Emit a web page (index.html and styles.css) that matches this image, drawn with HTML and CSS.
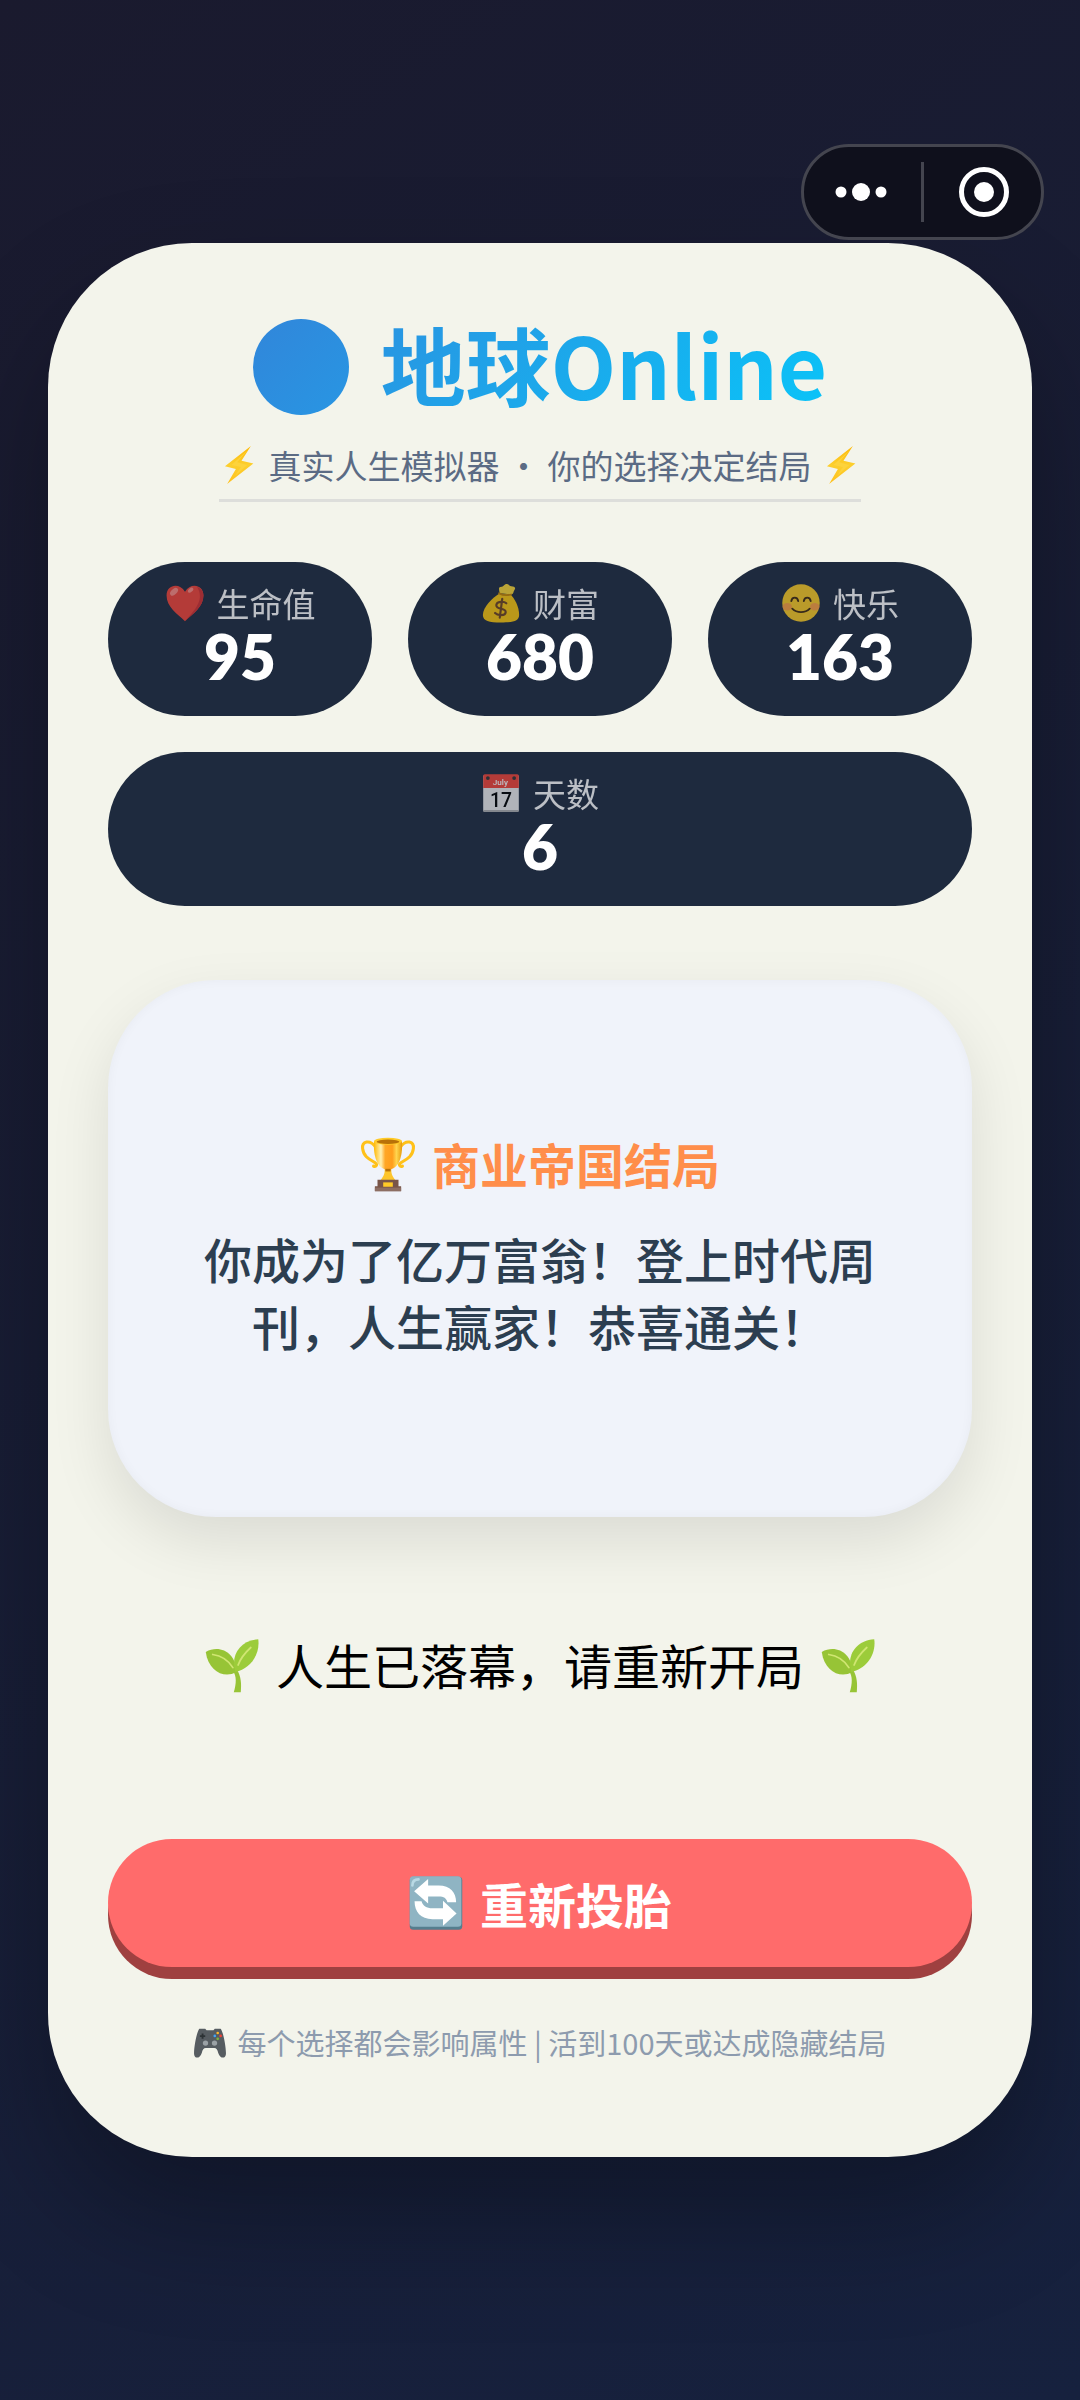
FILE: index.html
```html
<!DOCTYPE html>
<html lang="zh-CN">
<head>
<meta charset="UTF-8" />
<meta name="viewport" content="width=device-width, initial-scale=1.0" />
<title>地球Online</title>
<link rel="stylesheet" href="styles.css">
</head>
<body>
  <!-- shared icons -->
  <svg class="defs" aria-hidden="true">
    <defs>
      <linearGradient id="bolt-fill" x1="0" y1="0" x2="0" y2="1">
        <stop offset="0" stop-color="#feb804"/><stop offset=".5" stop-color="#fccf2e"/><stop offset="1" stop-color="#ffc01c"/>
      </linearGradient>
      <linearGradient id="cup-fill" x1="0" y1="0" x2="1" y2="0">
        <stop offset="0" stop-color="#ffb803"/><stop offset=".25" stop-color="#fff0b0"/><stop offset=".4" stop-color="#ffa726"/><stop offset=".65" stop-color="#ff9e1b"/><stop offset=".8" stop-color="#ffd54f"/><stop offset="1" stop-color="#e69a09"/>
      </linearGradient>
      <symbol id="bolt" viewBox="0 0 128 128">
        <path d="M102 3 19 68l35 9L26 125l84-66-38-9z" fill="url(#bolt-fill)"/>
        <path d="M92 16 40 64l30 6-18 28 38-34-32-9z" fill="#fdd33c"/>
      </symbol>
      <symbol id="sprout" viewBox="0 0 128 128">
        <path d="M66 78c9 10 8 29 2 48h16c2-18 1-37-9-52z" fill="#97c436"/>
        <path d="M74 80C46 96 10 78 4 34c34-18 70 4 70 46z" fill="#97c436"/>
        <path d="M72 80C60 44 80 8 124 5c5 37-20 68-52 75z" fill="#9ccc3a"/>
        <path d="M20 40c22 3 36 14 46 30M107 24C94 36 83 50 78 64" fill="none" stroke="#d0e672" stroke-width="4" stroke-linecap="round"/>
      </symbol>
    </defs>
  </svg>

  <div class="capsule">
    <button type="button" aria-label="更多">
      <svg viewBox="0 0 60 60"><g fill="#fff"><circle cx="8" cy="30" r="5.5"/><circle cx="28" cy="30" r="9"/><circle cx="48" cy="30" r="5.5"/></g></svg>
    </button>
    <button type="button" aria-label="关闭">
      <svg viewBox="0 0 60 60"><circle cx="31" cy="30" r="22.5" fill="none" stroke="#fff" stroke-width="5"/><circle cx="31" cy="30" r="10" fill="#fff"/></svg>
    </button>
  </div>

  <main class="card">
    <header>
      <h1><span class="globe"></span>地球Online</h1>
      <p class="subtitle">
        <svg class="icon"><use href="#bolt"/></svg>
        <span>真实人生模拟器 · 你的选择决定结局</span>
        <svg class="icon"><use href="#bolt"/></svg>
      </p>
    </header>

    <section class="stats">
      <div class="stat">
        <div class="label">
          <svg class="icon" viewBox="0 0 128 128">
            <path d="M64 122C38 98 5 76 5 40 5 5 46-2 64 28c18-30 59-23 59 12 0 36-33 58-59 82z" fill="#f44336"/>
            <path d="M103 13c22 38 0 67-39 109 26-24 59-46 59-82 0-13-8-23-20-27z" fill="#d32f2f"/>
            <ellipse cx="29" cy="28" rx="15" ry="9" transform="rotate(-42 29 28)" fill="#ff8a80"/>
            <ellipse cx="82" cy="23" rx="10" ry="6" transform="rotate(-40 82 23)" fill="#ff8a80"/>
          </svg>
          <span>生命值</span>
        </div>
        <div class="value">95</div>
      </div>
      <div class="stat">
        <div class="label">
          <svg class="icon" viewBox="0 0 128 128">
            <path d="M60 33C57 20 55 12 66 12c6 0 7-9 17-9 7 0 7 7 14 7 9 0 16 5 10 12-4 5-1 14-13 14z" fill="#fdd835"/>
            <path d="M58 34c-20 12-52 42-52 68 0 20 20 24 58 24s58-4 58-24c0-27-15-54-29-66z" fill="#fdc70c"/>
            <path d="M58 33c11 6 24 7 38 4" fill="none" stroke="#c68600" stroke-width="6" stroke-linecap="round"/>
            <path d="M81 65c-7-7-31-8-32 6-1 16 31 7 30 22-1 13-26 12-34 3M68 51l-8 60" fill="none" stroke="#70451e" stroke-width="7" stroke-linecap="round"/>
          </svg>
          <span>财富</span>
        </div>
        <div class="value">680</div>
      </div>
      <div class="stat">
        <div class="label">
          <svg class="icon" viewBox="0 0 128 128">
            <circle cx="64" cy="64" r="60" fill="#fdcb22"/>
            <ellipse cx="20" cy="76" rx="15" ry="12" fill="#ff8a50" opacity=".65"/><ellipse cx="108" cy="76" rx="15" ry="12" fill="#ff8a50" opacity=".65"/>
            <path d="M33 58c2-15 20-15 22 0M73 58c2-15 20-15 22 0M36 82c15 15 41 15 56 0" fill="none" stroke="#422b0d" stroke-width="6" stroke-linecap="round"/>
          </svg>
          <span>快乐</span>
        </div>
        <div class="value">163</div>
      </div>
      <div class="stat wide">
        <div class="label">
          <svg class="icon" viewBox="0 0 128 128">
            <rect x="7" y="6" width="114" height="118" rx="5" fill="#eee"/>
            <path d="M7 118h114v2a5 5 0 0 1-5 5H12a5 5 0 0 1-5-5z" fill="#b0b0b0"/>
            <path d="M12 4h104a5 5 0 0 1 5 5v39H7V9a5 5 0 0 1 5-5z" fill="#f44336"/>
            <circle cx="22" cy="16" r="6" fill="#333"/><circle cx="106" cy="16" r="6" fill="#333"/>
            <text x="62" y="38" class="month">July</text>
            <text x="64" y="110" class="date">17</text>
          </svg>
          <span>天数</span>
        </div>
        <div class="value">6</div>
      </div>
    </section>

    <section class="scene">
      <h2>
        <svg class="icon" viewBox="0 0 128 128">
          <path d="M36 25C22 7 4 12 6 29c2 18 15 24 27 31 8 5 5 11-2 9M92 25c14-18 32-13 30 4-2 18-15 24-27 31-8 5-5 11 2 9" fill="none" stroke="#ffc119" stroke-width="7" stroke-linecap="round"/>
          <path d="M56 72h16c-2 13 2 20 9 29H47c7-9 11-16 9-29z" fill="#fdc52c"/>
          <path d="M32 12h64c2 34-7 65-32 65S30 46 32 12z" fill="url(#cup-fill)"/>
          <ellipse cx="64" cy="12" rx="32" ry="8" fill="#ffca28"/><ellipse cx="64" cy="13" rx="26" ry="5" fill="#b87108"/>
          <path d="M58 75h12v6H58z" fill="#b87108"/>
          <path d="M40 100h48v15h6v11H34v-11h6z" fill="#795548"/>
          <path d="M34 118h60v8H34z" fill="#8d6e63"/>
          <path d="M53 106h22v10H53z" fill="#ffca28"/>
        </svg>
        <span>商业帝国结局</span>
      </h2>
      <p>你成为了亿万富翁！登上时代周刊，人生赢家！恭喜通关！</p>
    </section>

    <p class="ending">
      <svg class="icon"><use href="#sprout"/></svg>
      <span>人生已落幕，请重新开局</span>
      <svg class="icon"><use href="#sprout"/></svg>
    </p>

    <button type="button" class="restart">
      <svg class="icon" viewBox="0 0 128 128">
        <rect x="4" y="4" width="120" height="121" rx="8" fill="#557e8e"/>
        <rect x="4" y="3" width="118" height="115" rx="8" fill="#8fb4c3"/>
        <path d="M10 24c0-9 5-14 14-14" fill="none" stroke="#b9d9e4" stroke-width="6" stroke-linecap="round"/>
        <path d="M14 37 46 9v15h24c27 0 40 16 40 38H90c-2-9-8-13-20-13H46v16z" fill="#fff"/>
        <path d="M111 88 80 116v-15H56C29 101 15 84 15 60h16c3 11 11 16 25 16h24V59z" fill="#fff"/>
      </svg>
      <span>重新投胎</span>
    </button>

    <footer>
      <svg class="icon" viewBox="0 0 128 128">
        <path d="M24 14h22l5 6h26l5-6h22c9 8 21 70 20 95-1 19-22 19-29-4-3-11-7-18-15-18H48c-8 0-12 7-15 18-7 23-28 23-29 4-1-25 11-87 20-95z" fill="#565c61"/>
        <path d="M26 42h20M36 32v20" stroke="#2c3235" stroke-width="7"/>
        <circle cx="47" cy="68" r="10" fill="#9aa1a5"/><circle cx="81" cy="68" r="10" fill="#9aa1a5"/>
        <circle cx="93" cy="30" r="5" fill="#fdb52a"/><circle cx="93" cy="52" r="5" fill="#7cb342"/><circle cx="82" cy="41" r="5" fill="#42a5f5"/><circle cx="104" cy="41" r="5" fill="#f44336"/>
      </svg>
      <span>每个选择都会影响属性 | 活到100天或达成隐藏结局</span>
    </footer>
  </main>
</body>
</html>
```
FILE: styles.css
```css
*{box-sizing:border-box;margin:0;padding:0;}
body{font-family:"Noto Sans CJK SC","Noto Sans",sans-serif;background:linear-gradient(145deg,#1a1a2e,#16213e);min-height:100vh;padding:48px;display:flex;align-items:center;justify-content:center;position:relative;}
button{font-family:inherit;border:none;cursor:pointer;}
.defs{position:absolute;width:0;height:0;}
.icon{width:56px;height:56px;flex:none;}

/* mini program capsule */
.capsule{position:absolute;top:144px;right:36px;width:243px;height:96px;display:flex;align-items:center;background:#0f101c;border:3px solid #44454f;border-radius:48px;}
.capsule button{flex:1;height:60px;background:none;}
.capsule button + button{border-left:3px solid #44454f;}
.capsule svg{display:block;width:60px;height:60px;margin:0 auto;}

.card{width:100%;background:#f3f4eb;border-radius:144px;padding:60px 60px 94px;box-shadow:0 60px 120px rgba(0,0,0,.3);}
header{text-align:center;margin-bottom:60px;}
h1{display:flex;align-items:flex-start;justify-content:center;gap:32px;height:128px;font-size:85px;line-height:120px;font-weight:700;background:linear-gradient(135deg,#3a7bd5,#00d2ff);-webkit-background-clip:text;background-clip:text;color:transparent;}
.globe{align-self:center;width:96px;height:96px;border-radius:50%;background:linear-gradient(135deg,#3186da,#2896e3);}
.subtitle{display:inline-flex;align-items:center;gap:10px;margin-top:12px;padding-bottom:12px;border-bottom:3px solid #dddedb;font-size:33px;line-height:44px;color:#5b6b84;vertical-align:top;}
.subtitle .icon,.label .icon{width:40px;height:40px;}

.stats{display:grid;grid-template-columns:repeat(3,1fr);gap:36px;}
.stat{background:#1e2a3e;border-radius:80px;padding:20px 12px 28px;text-align:center;color:#fff;}
.wide{grid-column:1 / -1;}
.label{display:flex;align-items:center;justify-content:center;gap:12px;font-size:33px;line-height:42px;opacity:.7;}
.value{font-family:Lato,sans-serif;font-size:62px;line-height:64px;font-weight:800;}
.month{font:500 26px Roboto,sans-serif;fill:#fff;text-anchor:middle;}
.date{font:500 62px Roboto,sans-serif;fill:#000;text-anchor:middle;}

.scene{margin-top:74px;padding:150px 84px 158px;background:#f0f3fa;border-radius:108px;text-align:center;box-shadow:0 24px 60px rgba(0,0,0,.1),inset 0 0 12px rgba(0,0,0,.04);}
.scene h2{display:flex;align-items:center;justify-content:center;gap:16px;font-size:48px;line-height:67px;font-weight:700;color:#ff8e4a;}
.scene p{margin-top:28px;font-size:48px;line-height:67px;font-weight:500;color:#2c3e50;}

.ending{display:flex;align-items:center;justify-content:center;gap:16px;padding:114px 0 141px;font-size:48px;line-height:67px;color:#000;}
.restart{display:flex;align-items:center;justify-content:center;gap:16px;width:100%;height:128px;border-radius:64px;background:#ff6b6b;box-shadow:0 12px 0 #9f4040;color:#fff;font-size:48px;font-weight:700;}
footer{display:flex;align-items:center;justify-content:center;gap:10px;margin-top:54px;font-size:29px;line-height:42px;color:#8d9bae;}
footer .icon{width:34px;height:34px;}
```
